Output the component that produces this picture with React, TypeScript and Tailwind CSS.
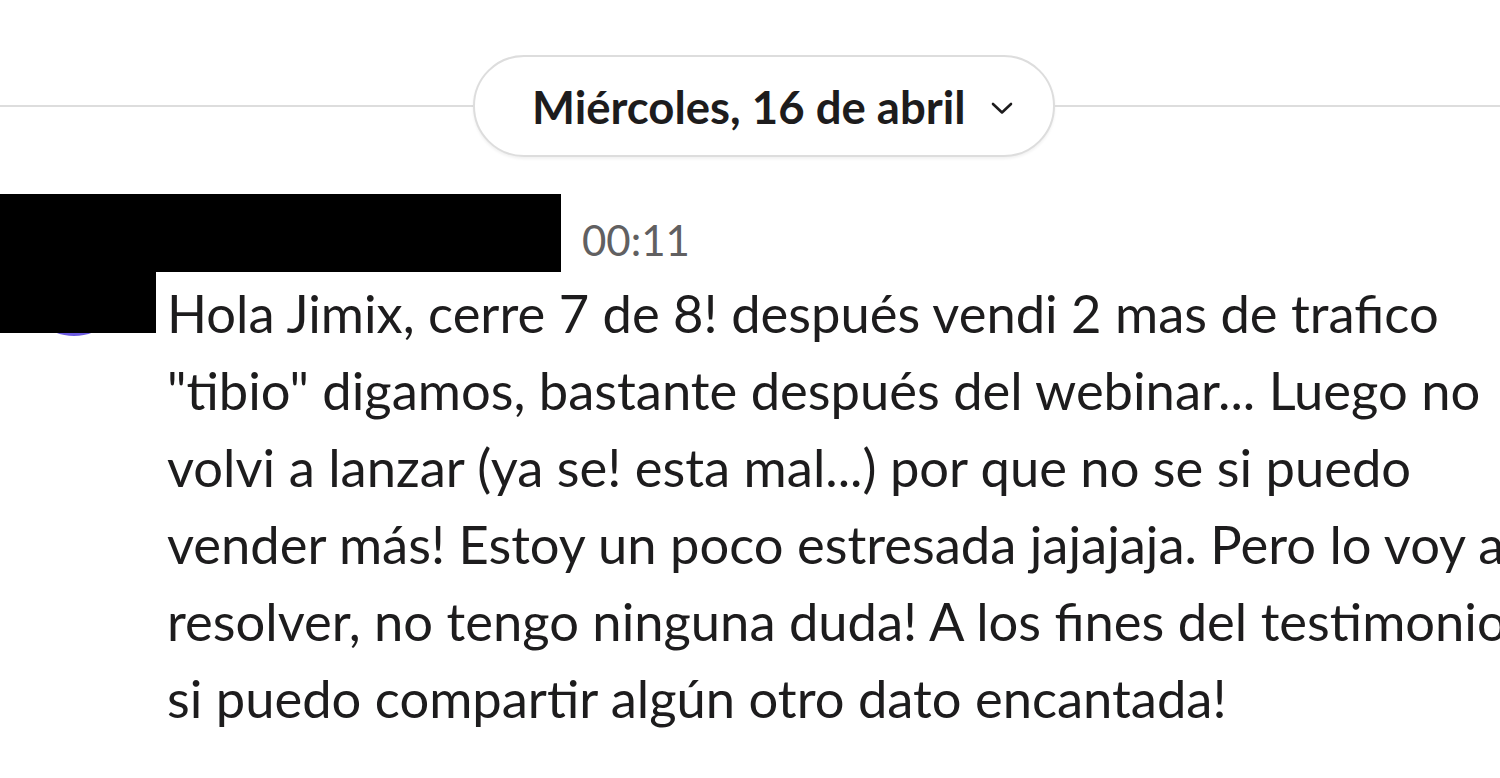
import React from 'react';

const lines = [
  'Hola Jimix, cerre 7 de 8! después vendi 2 mas de trafico',
  '"tibio" digamos, bastante después del webinar... Luego no',
  'volvi a lanzar (ya se! esta mal...) por que no se si puedo',
  'vender más! Estoy un poco estresada jajajaja. Pero lo voy a',
  'resolver, no tengo ninguna duda! A los fines del testimonio',
  'si puedo compartir algún otro dato encantada!',
];

function DateDivider() {
  return (
    <div className="flex items-center pt-[55px]">
      <div className="h-[2px] w-[473px] bg-[#dddddd]" />
      <button className="flex h-[102px] w-[582px] shrink-0 items-center rounded-full border-2 border-[#dddddd] bg-white pl-[57px] shadow-[0_2px_3px_rgba(0,0,0,0.06)]">
        <span className="mt-[2px] text-[45.5px] font-bold text-[#1d1c1d]">Miércoles, 16 de abril</span>
        <svg className="ml-[24px] mt-[4px]" width="24" height="14" viewBox="0 0 24 14" fill="none">
          <path d="M3 3l9 8.5 9-8.5" stroke="#1d1c1d" strokeWidth="2.6" strokeLinecap="round" strokeLinejoin="round" />
        </svg>
      </button>
      <div className="h-[2px] flex-1 bg-[#dddddd]" />
    </div>
  );
}

export default function App() {
  return (
    <div className="h-[778px] w-[1500px] overflow-hidden bg-white font-['Lato',sans-serif] text-[#1d1c1d]">
      <DateDivider />

      <div className="mt-[37px] flex">
        {/* avatar, redacted */}
        <div className="relative h-[139px] w-[156px] shrink-0">
          <div className="absolute left-[24px] top-[42px] h-[100px] w-[100px] rounded-full bg-[#6b5ae0]" />
          <div className="absolute inset-0 bg-black" />
        </div>

        <div className="min-w-0 flex-1">
          <div className="flex items-center">
            <div className="h-[78px] w-[405px] bg-black" />
            <span className="ml-[21px] mt-[14px] text-[42px] text-[#616061]">00:11</span>
          </div>
          <div className="ml-[11px] mt-[2px] text-[52.5px] leading-[77px] whitespace-nowrap">
            {lines.map((l) => (
              <p key={l}>{l}</p>
            ))}
          </div>
        </div>
      </div>
    </div>
  );
}
